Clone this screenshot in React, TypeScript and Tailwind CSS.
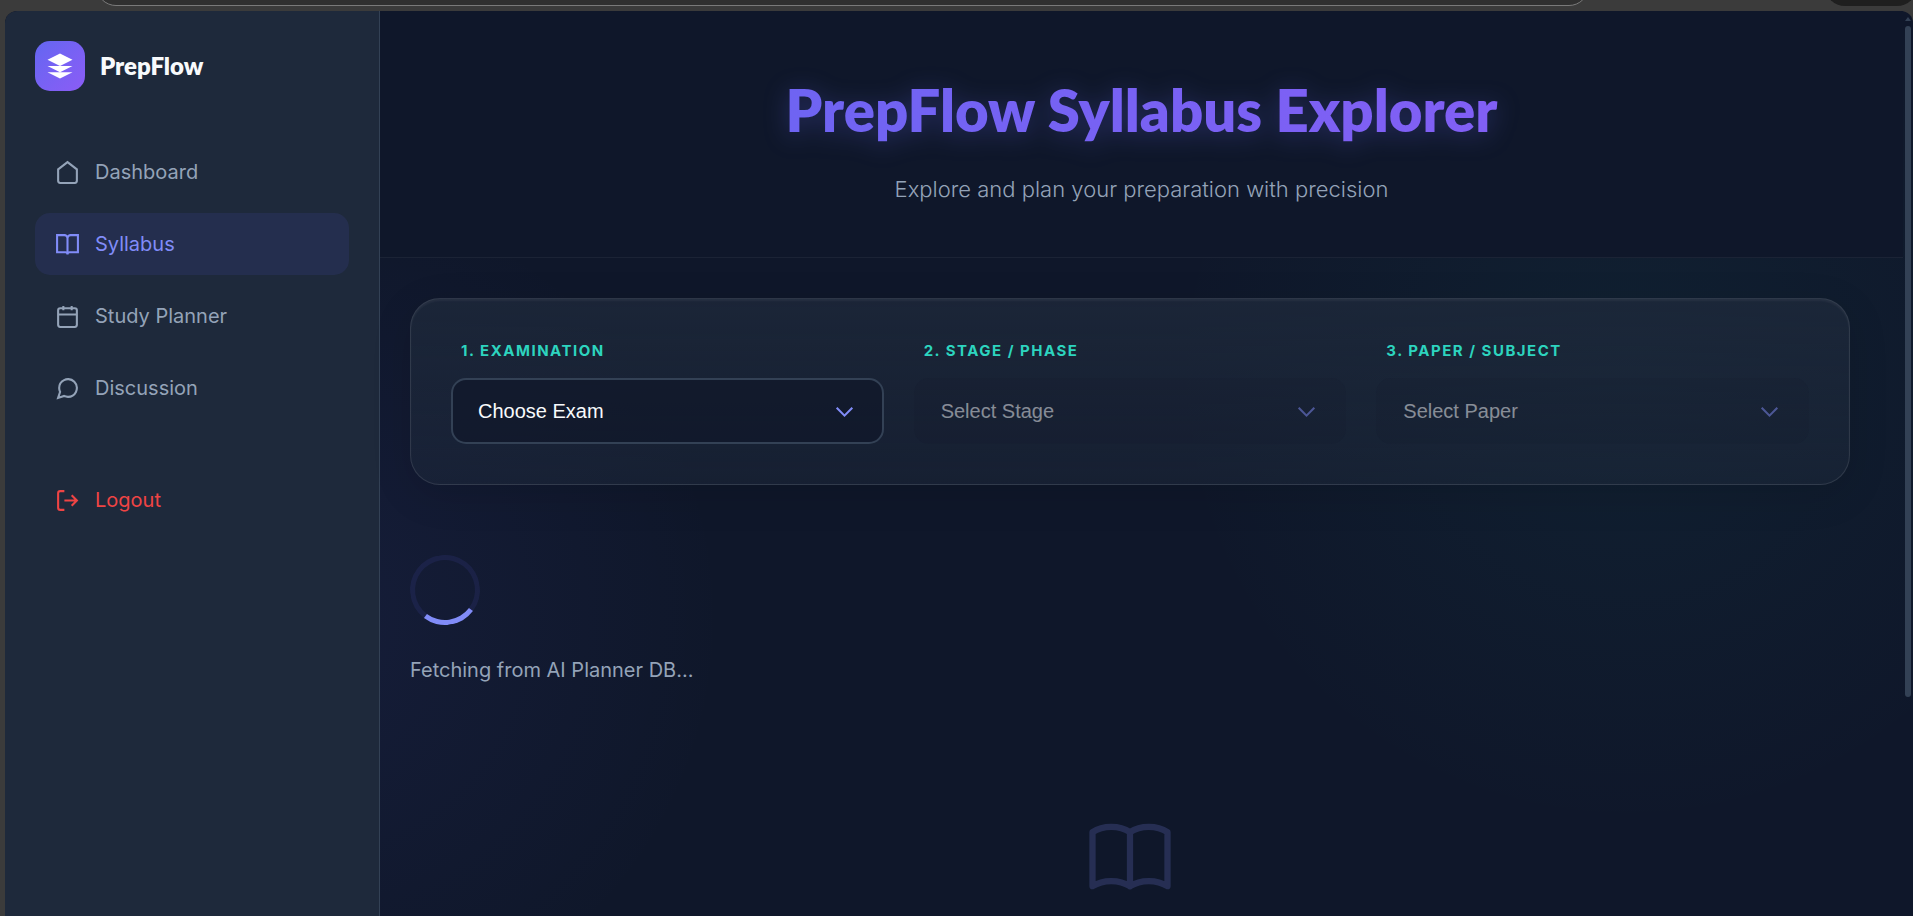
import React from "react";

const navItems = [
  {
    name: "Dashboard",
    active: false,
    icon: <path d="M3 9l9-7 9 7v11a2 2 0 0 1-2 2H5a2 2 0 0 1-2-2z" />,
  },
  {
    name: "Syllabus",
    active: true,
    icon: (
      <path d="M2 3h7a3 3 0 0 1 3 3v15.5a2 2 0 0 0-2-2H2zM22 3h-7a3 3 0 0 0-3 3v15.5a2 2 0 0 1 2-2h8z" />
    ),
  },
  {
    name: "Study Planner",
    active: false,
    icon: (
      <>
        <rect x="3" y="4" width="18" height="18" rx="2" />
        <path d="M8 2v4M16 2v4M3 10h18" />
      </>
    ),
  },
  {
    name: "Discussion",
    active: false,
    icon: (
      <path d="M21 11.5a8.38 8.38 0 0 1-.9 3.8 8.5 8.5 0 0 1-7.6 4.7 8.38 8.38 0 0 1-3.8-.9L3 21l1.9-5.7a8.38 8.38 0 0 1-.9-3.8 8.5 8.5 0 0 1 4.7-7.6 8.38 8.38 0 0 1 3.8-.9h.5a8.48 8.48 0 0 1 8 8v.5z" />
    ),
  },
];

const filters = [
  { id: "exam", label: "1. Examination", option: "Choose Exam", disabled: false },
  { id: "stage", label: "2. Stage / Phase", option: "Select Stage", disabled: true },
  { id: "paper", label: "3. Paper / Subject", option: "Select Paper", disabled: true },
];

const NavIcon = ({ children }: { children: React.ReactNode }) => (
  <svg
    viewBox="0 0 24 24"
    fill="none"
    stroke="currentColor"
    strokeWidth="2"
    className="w-[25px] h-[25px] shrink-0"
  >
    {children}
  </svg>
);

const Sidebar = () => {
  return (
    <aside className="w-[375px] shrink-0 bg-[#1e293b] border-r border-[#334155] p-[30px] rounded-tl-xl">
      {/* logo */}
      <div className="flex items-center gap-[15px]">
        <div className="w-[50px] h-[50px] rounded-[15px] bg-linear-to-br from-[#6366f1] to-[#8b5cf6] flex items-center justify-center">
          <svg viewBox="0 0 24 24" fill="white" className="w-[30px] h-[30px]">
            <path d="M12 2L2 7l10 5 10-5zM2 12l10 5 10-5zM2 17l10 5 10-5z" />
          </svg>
        </div>
        <p className="font-[Lato,sans-serif] text-2xl font-extrabold text-slate-50">
          PrepFlow
        </p>
      </div>

      {/* links */}
      <nav className="mt-[50px] flex flex-col gap-[10px]">
        {navItems.map((item) => (
          <a
            key={item.name}
            href="#"
            className={
              item.active
                ? "flex items-center gap-[15px] h-[62px] px-5 rounded-[15px] text-xl text-[#818cf8] bg-[#6366f1]/10"
                : "flex items-center gap-[15px] h-[62px] px-5 rounded-[15px] text-xl text-[#94a3b8]"
            }
          >
            <NavIcon>{item.icon}</NavIcon>
            {item.name}
          </a>
        ))}
      </nav>

      <a
        href="#"
        className="mt-[50px] flex items-center gap-[15px] h-[62px] px-5 rounded-[15px] text-xl text-[#ef4444]"
      >
        <NavIcon>
          <path d="M9 21H5a2 2 0 0 1-2-2V5a2 2 0 0 1 2-2h4M16 17l5-5-5-5M21 12H9" />
        </NavIcon>
        Logout
      </a>
    </aside>
  );
};

const FilterCard = () => {
  return (
    <div className="grid grid-cols-3 gap-[30px] p-10 rounded-[30px] border border-white/10 bg-linear-to-b from-[#1e293b]/80 to-[#1e293b]/50 shadow-[0_10px_40px_rgba(0,0,0,0.12),inset_0_2px_2px_rgba(255,255,255,0.05)]">
      {filters.map((filter) => (
        <div key={filter.id} className="flex flex-col gap-[15px]">
          <label
            htmlFor={filter.id}
            className="pl-[10px] text-[15px] leading-6 font-bold uppercase tracking-[1.5px] text-[#2dd4bf]"
          >
            {filter.label}
          </label>
          <div className="relative">
            <select
              id={filter.id}
              disabled={filter.disabled}
              className="w-full h-[66px] appearance-none rounded-[15px] border-2 border-[#334155] bg-[#0f172a]/70 pl-[25px] pr-[60px] font-[Liberation_Sans,Arial,sans-serif] text-xl text-slate-50 disabled:border-transparent disabled:bg-[#0f172a]/10 disabled:text-slate-50/50 disabled:opacity-100"
            >
              <option>{filter.option}</option>
            </select>
            <svg
              viewBox="0 0 24 24"
              fill="none"
              stroke="#818cf8"
              strokeWidth="2"
              className={
                filter.disabled
                  ? "absolute right-[27px] top-[22px] w-[25px] h-[25px] opacity-50 pointer-events-none"
                  : "absolute right-[27px] top-[22px] w-[25px] h-[25px] pointer-events-none"
              }
            >
              <path d="M4.5 7.5l7.5 7.5 7.5-7.5" />
            </svg>
          </div>
        </div>
      ))}
    </div>
  );
};

const App = () => {
  return (
    <div className="h-screen flex flex-col overflow-hidden bg-[#3b3b3b] font-[Inter,sans-serif]">
      {/* browser toolbar edge */}
      <div className="h-[11px] pb-[5px] shrink-0 flex items-end pl-[96px] overflow-hidden">
        <div className="flex-1 h-10 rounded-[20px] border border-[#7a7a7a] bg-[#303030]" />
        <div className="ml-[236px] mr-[-4px] w-[92px] h-10 rounded-[20px] bg-[#1f1f1f]" />
      </div>

      <div className="flex-1 min-h-0 flex ml-[5px] rounded-t-xl overflow-hidden bg-[#0f172a] bg-[radial-gradient(circle_434px_at_15%_67%,rgba(99,102,241,0.08),transparent),radial-gradient(circle_459px_at_85%_40%,rgba(45,212,191,0.05),transparent)]">
        <Sidebar />

        <main className="flex-1 min-w-0">
          <header className="h-[247px] bg-[#0f172a] border-b border-white/5 pt-[61px] text-center">
            <h1 className="font-[Lato,sans-serif] font-extrabold text-[58px] leading-[75px] bg-linear-to-r from-[#6366f1] to-[#8b5cf6] bg-clip-text text-transparent drop-shadow-[0_4px_12px_rgba(99,102,241,0.3)]">
              PrepFlow Syllabus Explorer
            </h1>
            <p className="mt-6 text-[22px] leading-[36px] font-light text-[#94a3b8]">
              Explore and plan your preparation with precision
            </p>
          </header>

          <div className="pt-10 pl-[30px] pr-[53px]">
            <FilterCard />

            {/* loader */}
            <div className="mt-[70px]">
              <div className="w-[70px] h-[70px] rounded-full border-5 border-[#6366f1]/10 border-b-[#818cf8] rotate-[-8deg]" />
              <p className="mt-[30px] text-xl leading-[30px] text-[#94a3b8]">
                Fetching from AI Planner DB...
              </p>
            </div>

            {/* empty state */}
            <div className="mt-[121px] flex justify-center">
              <svg
                viewBox="0 0 24 24"
                fill="none"
                stroke="#818cf8"
                strokeWidth="1.5"
                strokeLinecap="round"
                strokeLinejoin="round"
                className="w-[100px] h-[100px] shrink-0 opacity-20"
              >
                <path d="M12 6.253v13m0-13C10.832 5.477 9.246 5 7.5 5S4.168 5.477 3 6.253v13C4.168 18.477 5.754 18 7.5 18s3.332.477 4.5 1.253m0-13C13.168 5.477 14.754 5 16.5 5c1.747 0 3.332.477 4.5 1.253v13C19.832 18.477 18.247 18 16.5 18c-1.746 0-3.332.477-4.5 1.253" />
              </svg>
            </div>
          </div>
        </main>

        {/* scrollbar */}
        <div className="w-[10px] shrink-0 flex flex-col items-center pt-[6px]">
          <svg viewBox="0 0 6 4" className="w-[6px] h-1" fill="#334155">
            <path d="M3 0l3 4H0z" />
          </svg>
          <div className="mt-[5px] w-[6px] h-[671px] rounded-full bg-[#334155]" />
        </div>
      </div>
    </div>
  );
};

export default App;
